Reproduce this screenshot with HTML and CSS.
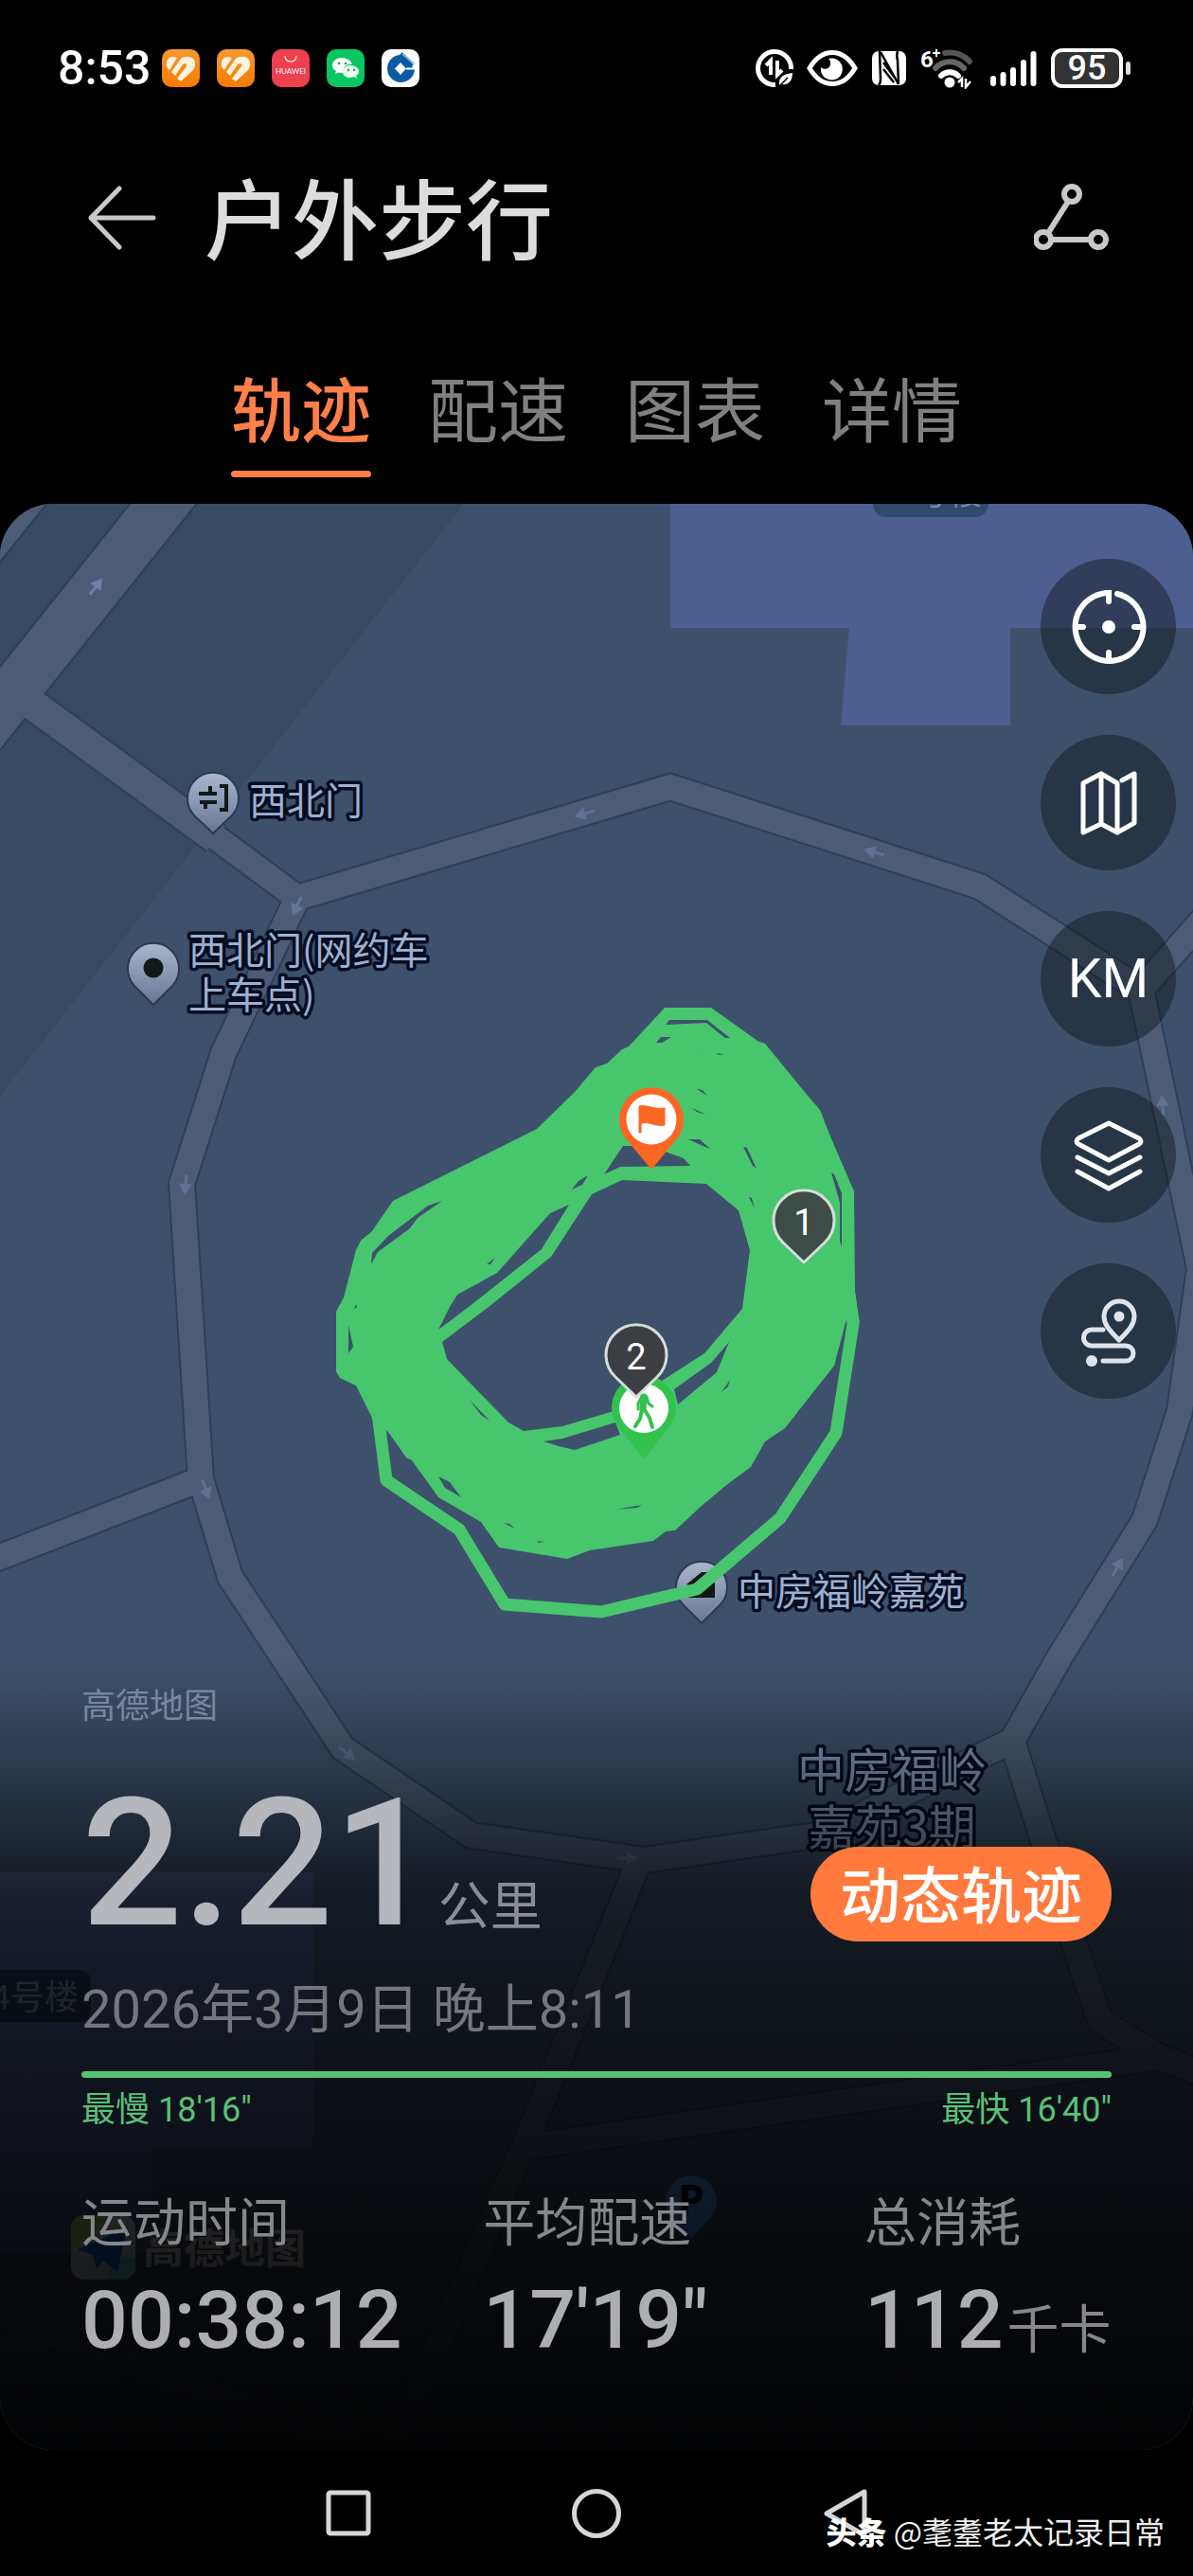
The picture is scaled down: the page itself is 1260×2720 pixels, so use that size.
FILE: index.html
```html
<!DOCTYPE html>
<html lang="zh-CN">
<head>
    <meta charset="UTF-8">
    <meta name="viewport" content="width=device-width, initial-scale=1.0">
    <title>户外步行</title>
    <link rel="stylesheet" href="styles.css">
</head>
<body>
    <!-- shared shapes -->
    <svg class="defs" width="0" height="0" aria-hidden="true">
        <defs>
            <linearGradient id="pinGrey" x1="0" y1="0" x2="0" y2="1">
                <stop offset="0" stop-color="#a9b7cd"/>
                <stop offset="1" stop-color="#667795"/>
            </linearGradient>
            <linearGradient id="orange" x1="0" y1="0" x2="0" y2="1">
                <stop offset="0" stop-color="#f79a2e"/>
                <stop offset="1" stop-color="#f77a05"/>
            </linearGradient>
            <symbol id="health" viewBox="0 0 40 40">
                <rect width="40" height="40" rx="10" fill="url(#orange)"/>
                <path d="M5 17C4 12 7 8 12 8L16 9L8 22C6 20 5 19 5 17ZM10 24L20 10C24 7 31 7 34 11C36 15 35 19 33 22L20 34L16 31L26 18C27 15 24 14 22 16L14 28Z" fill="#fff3df"/>
            </symbol>
            <symbol id="arrow" viewBox="-12 -12 24 24">
                <path d="M-10 0H4" stroke="#6b7fa8" stroke-width="3"/>
                <path d="M0 -7L12 0L0 7Z" fill="#6b7fa8"/>
            </symbol>
        </defs>
    </svg>

    <div class="status-bar">
        <span class="clock">8:53</span>
        <div class="apps">
            <svg width="40" height="40"><use href="#health"/></svg>
            <svg width="40" height="40"><use href="#health"/></svg>
            <svg width="40" height="40" viewBox="0 0 40 40">
                <rect width="40" height="40" rx="10" fill="#ef4050"/>
                <path d="M14 7C14 15 26 15 26 7" fill="none" stroke="#fff" stroke-width="1.2"/>
                <text x="20" y="26" class="huawei">HUAWEI</text>
            </svg>
            <svg width="40" height="40" viewBox="0 0 40 40">
                <rect width="40" height="40" rx="10" fill="#08c762"/>
                <path d="M16 9C10 9 6 13 6 17C6 20 8 22 10 23L9 26L13 24.500C14 25 17 25 18 25C16 19 21 15 27 16C26 12 21 9 16 9Z" fill="#fff"/>
                <path d="M25 17C20 17 17 20 17 24C17 28 21 30 25 30L29 29L32 31L31 28C33 27 34 25 34 23C34 20 30 17 25 17Z" fill="#e9fff2"/>
                <g fill="#08a050"><circle cx="13" cy="15" r="1.300"/><circle cx="20" cy="15" r="1.300"/><circle cx="23" cy="22" r="1.200"/><circle cx="29" cy="22" r="1.200"/></g>
            </svg>
            <svg width="40" height="40" viewBox="0 0 40 40">
                <rect width="40" height="40" rx="10" fill="#fff"/>
                <path d="M19 6L34 20L35 21A14.500 14.500 0 1 1 19 6Z" fill="#0a5aa6"/>
                <path d="M20 5L33 17" stroke="#0a5aa6" stroke-width="5"/>
                <path d="M22 5L34 16" stroke="#fff" stroke-width="1"/>
                <path d="M20 14L26 20.500L20 27L14 20.500Z" fill="#fff"/>
                <path d="M26 20.500H36" stroke="#fff" stroke-width="2"/>
            </svg>
        </div>
        <div class="signals">
            <svg width="40" height="40" viewBox="0 0 40 40" fill="none" stroke="#fff">
                <path d="M21 37.500A17.500 17.500 0 1 1 37.500 21" stroke-width="5"/>
                <path d="M11 17L16 12V27M23 12V27L28 22" stroke-width="4"/>
                <path d="M25 38C24 29 30 26 39 25C39 34 34 38 28 37Z" fill="#fff" stroke="none"/>
                <path d="M24 40L34 30" stroke="#000" stroke-width="1.500"/>
            </svg>
            <svg width="54" height="40" viewBox="0 0 54 40">
                <path d="M3 20C16 -2 38 -2 51 20C38 42 16 42 3 20Z" fill="none" stroke="#fff" stroke-width="5"/>
                <path d="M23 10A11.500 11.500 0 1 1 15 19C19 23 26 20 25 14C25 12 24 11 23 10Z" fill="#fff"/>
            </svg>
            <svg width="38" height="40" viewBox="0 0 38 40">
                <rect x="1" y="2" width="36" height="36" rx="7" fill="#fff"/>
                <path d="M9 2L10 32C10 35 9 37 8 38M28 2C27 5 27 8 28 12L29 37" fill="none" stroke="#000" stroke-width="2.500"/>
                <path d="M10 3L29 37M13 14L25 30M13 21L24 35" fill="none" stroke="#000" stroke-width="2.500"/>
            </svg>
            <svg width="58" height="44" viewBox="0 0 58 44">
                <text x="0" y="21" class="wifi-gen">6</text>
                <path d="M13 6H21M17 2V10" stroke="#fff" stroke-width="2"/>
                <g fill="none" stroke-width="6" stroke-linecap="round">
                    <path d="M26 6C36 4 46 8 52 15" stroke="#555"/>
                    <path d="M16 22C24 13 38 13 46 22" stroke="#666"/>
                    <path d="M22 30C27 25 35 25 40 30" stroke="#fff"/>
                </g>
                <circle cx="31" cy="37" r="5.500" fill="#fff"/>
                <path d="M40 37L44 33V42M48 33V42L53 36" fill="none" stroke="#fff" stroke-width="2.500"/>
            </svg>
            <svg width="52" height="40" viewBox="0 0 52 40" stroke="#fff" stroke-width="6" stroke-linecap="round">
                <path d="M5 31V36M15.500 27V36M26 22V36M37 14V36M47.500 5V36"/>
            </svg>
            <div class="battery">95</div>
        </div>
    </div>

    <header class="title-bar">
        <button class="icon-button" aria-label="返回">
            <svg width="74" height="72" viewBox="0 0 74 72" fill="none" stroke="#c9c9c9" stroke-width="5" stroke-linecap="round" stroke-linejoin="round">
                <path d="M70 36H4M34 5L4 36L34 67"/>
            </svg>
        </button>
        <h1>户外步行</h1>
        <button class="icon-button" aria-label="分享">
            <svg width="80" height="72" viewBox="0 0 80 72" fill="none" stroke="#c9c9c9" stroke-width="6">
                <circle cx="40" cy="11" r="8"/>
                <circle cx="10" cy="59" r="8"/>
                <circle cx="68" cy="59" r="8"/>
                <path d="M36 19L15 52M19 59H59"/>
            </svg>
        </button>
    </header>

    <nav class="tabs">
        <a href="#track" class="active">轨迹</a>
        <a href="#pace">配速</a>
        <a href="#chart">图表</a>
        <a href="#detail">详情</a>
    </nav>

    <main class="map" id="track">
        <svg class="map-canvas" viewBox="0 532 1260 2055" preserveAspectRatio="xMidYMin slice">
            <rect y="532" width="1260" height="2055" fill="#3d516d"/>
            <path d="M0 532H490L0 1157Z" fill="#374a64"/>
            <!-- buildings -->
            <path d="M708 532H1260V663H1067V766H888L897 663H708Z" fill="#4d5f90"/>
            <path d="M0 1977H331V2266H162V2378H0Z" fill="#4d5f90"/>

            <!-- roads: dark casing first, then the surface -->
            <g class="casing">
                <path d="M0 532H48L0 592Z"/>
                <path class="wide" d="M198 500L-40 798"/>
                <path class="mid" d="M14 729L228 885"/>
                <path d="M225 882L314 948L708 831L1035 936L1205 1045L1267 1339L1246 1490L1209 1605L1119 1750L1069 1838L868 1937L680 1964L498 1938L362 1846L299 1750L243 1665L212 1562L192 1250L236 1112L314 948"/>
                <path d="M1205 1045L1290 949M212 1562L-10 1648M1069 1838L1104 1950L1134 2050L1162 2134L1225 2172L1280 2194M1225 2172L555 2267M675 1965L560 2250L405 2610M-10 2480L58 2467L400 2590"/>
            </g>
            <g class="surface">
                <path d="M0 532H48L0 592Z"/>
                <path class="wide" d="M198 500L-40 798"/>
                <path class="mid" d="M14 729L228 885"/>
                <path d="M225 882L314 948L708 831L1035 936L1205 1045L1267 1339L1246 1490L1209 1605L1119 1750L1069 1838L868 1937L680 1964L498 1938L362 1846L299 1750L243 1665L212 1562L192 1250L236 1112L314 948"/>
                <path d="M1205 1045L1290 949M212 1562L-10 1648M1069 1838L1104 1950L1134 2050L1162 2134L1225 2172L1280 2194M1225 2172L555 2267M675 1965L560 2250L405 2610M-10 2480L58 2467L400 2590"/>
            </g>
            <g>
                <use href="#arrow" x="-12" y="-12" width="24" height="24" transform="translate(101 620) rotate(-52)"/>
                <use href="#arrow" x="-12" y="-12" width="24" height="24" transform="translate(618 859) rotate(163)" opacity=".6"/>
                <use href="#arrow" x="-12" y="-12" width="24" height="24" transform="translate(924 900) rotate(197)" opacity=".6"/>
                <use href="#arrow" x="-12" y="-12" width="24" height="24" transform="translate(314 956) rotate(115)" opacity=".7"/>
                <use href="#arrow" x="-12" y="-12" width="24" height="24" transform="translate(196 1250) rotate(95)" opacity=".6"/>
                <use href="#arrow" x="-12" y="-12" width="24" height="24" transform="translate(217 1572) rotate(70)" opacity=".6"/>
                <use href="#arrow" x="-12" y="-12" width="24" height="24" transform="translate(366 1851) rotate(40)" opacity=".6"/>
                <use href="#arrow" x="-12" y="-12" width="24" height="24" transform="translate(662 1962)" opacity=".6"/>
                <use href="#arrow" x="-12" y="-12" width="24" height="24" transform="translate(1180 1655) rotate(-60)" opacity=".6"/>
                <use href="#arrow" x="-12" y="-12" width="24" height="24" transform="translate(1228 1168) rotate(-95)" opacity=".6"/>
            </g>

            <!-- building numbers -->
            <rect x="922" y="500" width="122" height="46" rx="14" fill="#2f4a6a"/>
            <text x="966" y="533" class="building">号楼</text>
            <rect x="-30" y="2080" width="126" height="55" rx="12" fill="#1f3650"/>
            <text x="-9" y="2122" class="building">4号楼</text>

            <!-- places -->
            <g fill="url(#pinGrey)" stroke="#2a3a52" stroke-width="2">
                <path d="M225 880L205 861A27 27 0 1 1 245 861Z"/>
                <path d="M162 1061L142 1041A27 27 0 1 1 182 1041Z"/>
                <path d="M741 1714L721 1694A27 27 0 1 1 761 1694Z"/>
            </g>
            <path d="M232 830H239V855H232M210 838H229M222 830V838M229 847H211M217 848V854" fill="none" stroke="#10181a" stroke-width="4"/>
            <circle cx="162" cy="1022" r="10.500" fill="#10181a"/>
            <path d="M725 1673L741 1660H748L755 1672V1687H727V1682H734V1676Z" fill="#10181a"/>
            <g class="place">
                <text x="263" y="860">西北门</text>
                <text x="199" y="1018">西北门(网约车</text>
                <text x="199" y="1065">上车点)</text>
                <text x="779" y="1695">中房福岭嘉苑</text>
            </g>
            <g class="place area">
                <text x="942" y="1888">中房福岭</text>
                <text x="942" y="1948">嘉苑3期</text>
            </g>

            <!-- parking -->
            <path d="M730 2364L708 2340A27 27 0 1 1 752 2340Z" fill="#5f9cff"/>
            <text x="730" y="2337" class="parking">P</text>

            <!-- map provider -->
            <g>
                <rect x="75" y="2339" width="68" height="68" rx="14" fill="#e4ecf2"/>
                <path d="M75 2375V2353A14 14 0 0 1 89 2339H115L98 2360Z" fill="#b4f070"/>
                <path d="M110 2407L125 2385H143V2393A14 14 0 0 1 129 2407Z" fill="#80e8ff"/>
                <path d="M82 2375L134 2352L124 2399L109 2387L102 2396L98 2381Z" fill="#0a7cff"/>
                <text x="151" y="2390" class="provider">高德地图</text>
            </g>

            <!-- recorded track -->
            <path class="track" fill-rule="evenodd" d="M702 1064H751L800 1099L808 1102L849 1152L866 1172L877 1200L902 1258L903 1365L908 1397L894 1393L881 1442L829 1508L808 1522L793 1549L766 1569L741 1590L713 1616L703 1617L690 1627L623 1637L599 1646L575 1642L527 1634L508 1607L463 1581L435 1542L429 1539L410 1512L393 1497L376 1463L359 1455L355 1448V1385L363 1370L376 1320L381 1310L393 1300L415 1268L567 1192L607 1153L629 1127L641 1123L657 1108L664 1105Z
                M657 1246L746 1250L780 1278L792 1320L784 1382L744 1429L699 1458L648 1490L594 1506L553 1511L537 1502L472 1435L467 1417L516 1380L582 1327L625 1261Z
                M601 1272L581 1281L525 1344L483 1367L475 1380L463 1404L495 1380L572 1319Z
                M658 1210H685L722 1223L729 1231L655 1232L638 1240Z
                M621 1241L611 1247L604 1256L615 1251Z
                M467 1268L452 1273L410 1305L393 1323L392 1335L399 1322L433 1297L441 1286Z
                M703 1082L707 1077H747L771 1096H766L746 1080Z
                M693 1101L698 1095H709L699 1101Z
                M736 1150L742 1151L747 1157ZM731 1170L746 1177L736 1174ZM741 1110L745 1109ZM756 1112L765 1113L760 1114Z
                M727 1203H739L750 1213L738 1208Z
                M785 1211L789 1212L799 1234L795 1231Z
                M791 1264L794 1265L797 1276Z
                M878 1238L881 1240L889 1260V1317L887 1310V1270Z
                M514 1335L523 1328L518 1335Z
                M495 1477L517 1500L508 1494Z
                M463 1559L475 1565L487 1581L470 1571Z
                M650 1594L678 1589L673 1592Z
                M532 1608L538 1609L544 1614ZM567 1627L575 1628L569 1629Z
                M770 1417L751 1439L712 1467L716 1483L757 1449Z
                M574 1522L594 1519L650 1502L655 1515L607 1531L590 1527Z
                M771 1457L762 1470L769 1464Z
                M368 1399L373 1422L368 1429ZM376 1377L377 1380L374 1383ZM427 1384L429 1390Z"/>
            <path class="lap" d="M896 1360L901 1398L883 1513L824 1603L736 1678L635 1702L533 1694L485 1615L408 1563L400 1500L396 1480"/>

            <!-- start, kilometre marks and finish -->
            <path d="M680 1541L651 1504A34 34 0 1 1 709 1504Z" fill="#33c24e"/>
            <circle cx="680" cy="1487" r="26" fill="#fff"/>
            <g fill="none" stroke="#33c24e" stroke-linecap="round" stroke-linejoin="round">
                <path d="M680 1475L679 1488" stroke-width="7"/>
                <path d="M678 1474L674 1482V1488M683 1475L685 1482L689 1485" stroke-width="3"/>
                <path d="M678 1489L676 1498L671 1506M681 1489L686 1497L689 1507" stroke-width="4"/>
            </g>
            <g class="km">
                <path d="M849 1333L827 1312A32 32 0 1 1 871 1312Z" fill="#3d4c46"/>
                <path d="M672 1475L650 1454A32 32 0 1 1 694 1454Z" fill="#3d3e43"/>
                <text x="849" y="1304">1</text>
                <text x="672" y="1446">2</text>
            </g>
            <path d="M688 1235L659 1200A34 34 0 1 1 717 1200Z" fill="#fb6622"/>
            <circle cx="688" cy="1182" r="26.500" fill="#fff"/>
            <path d="M675 1196V1168C684 1166 691 1172 702 1170V1188C692 1190 687 1184 677 1186V1196Z" fill="#fb6622" stroke="#fb6622"/>
        </svg>

        <div class="tools">
            <button aria-label="定位">
                <svg width="80" height="80" viewBox="0 0 80 80" fill="none" stroke="#fff" stroke-width="6" stroke-linecap="round">
                    <path d="M49 5A36 36 0 1 1 40 4V13"/>
                    <path d="M40 75V67M5 40H13M75 40H67"/>
                    <circle cx="40" cy="40" r="7" fill="#fff" stroke="none"/>
                </svg>
            </button>
            <button aria-label="地图类型">
                <svg width="80" height="80" viewBox="0 0 80 80" fill="none" stroke="#fff" stroke-width="5" stroke-linecap="round" stroke-linejoin="round">
                    <path d="M54 16L67 9V61L49 71L32 62L13 71V19L32 9L49 19V71M32 9V62"/>
                </svg>
            </button>
            <button class="km-toggle">KM</button>
            <button aria-label="图层">
                <svg width="80" height="80" viewBox="0 0 80 80" fill="none" stroke="#fff" stroke-width="5" stroke-linecap="round" stroke-linejoin="round">
                    <path d="M40 6L72 22Q76 25 72 28L40 45L8 28Q4 25 8 22Z"/>
                    <path d="M7 42L40 59L73 42M7 57L40 75L73 57"/>
                </svg>
            </button>
            <button aria-label="路线">
                <svg width="80" height="80" viewBox="0 0 80 80" fill="none" stroke="#e0e4ec" stroke-width="5" stroke-linecap="round">
                    <path d="M51 49C40 38 35 32 35 24A16 16 0 0 1 67 24C67 32 62 38 51 49Z" stroke-linejoin="round"/>
                    <circle cx="51" cy="24" r="5.500" fill="#e0e4ec" stroke="none"/>
                    <path d="M34 38H22A8 8 0 0 0 22 55H58A8 8 0 0 1 58 71H34"/>
                    <circle cx="22" cy="71" r="6" fill="#e0e4ec" stroke="none"/>
                </svg>
            </button>
        </div>

        <section class="summary">
            <p class="source">高德地图</p>
            <div class="distance">
                <p><span class="number">2.21</span> <span class="unit">公里</span></p>
                <button class="replay">动态轨迹</button>
            </div>
            <p class="date">2026年3月9日 晚上8:11</p>
            <div class="pace-line"></div>
            <div class="pace-range">
                <span>最慢 18'16"</span>
                <span>最快 16'40"</span>
            </div>
            <dl class="stats">
                <div>
                    <dt>运动时间</dt>
                    <dd>00:38:12</dd>
                </div>
                <div>
                    <dt>平均配速</dt>
                    <dd>17'19"</dd>
                </div>
                <div>
                    <dt>总消耗</dt>
                    <dd>112<small>千卡</small></dd>
                </div>
            </dl>
        </section>
    </main>

    <footer class="nav-bar">
        <button aria-label="最近任务">
            <svg width="52" height="54" viewBox="0 0 52 54" fill="none" stroke="#d6d6d6" stroke-width="5">
                <rect x="5" y="5" width="42" height="43" rx="2"/>
            </svg>
        </button>
        <button aria-label="主屏幕">
            <svg width="52" height="54" viewBox="0 0 52 54" fill="none" stroke="#d6d6d6" stroke-width="5">
                <circle cx="26" cy="27" r="23.500"/>
            </svg>
        </button>
        <button aria-label="返回上一级">
            <svg width="52" height="54" viewBox="0 0 52 54" fill="none" stroke="#d6d6d6" stroke-width="5" stroke-linejoin="round">
                <path d="M47 4V50L7 27Z"/>
            </svg>
        </button>
        <p class="author"><b>头条</b> @耄耋老太记录日常</p>
    </footer>
</body>
</html>
```
FILE: styles.css
```css
* {
    box-sizing: border-box;
}

body {
    margin: 0;
    min-height: 100vh;
    display: flex;
    flex-direction: column;
    background-color: #000;
    color: #fff;
    font-family: "Noto Sans CJK SC", "Noto Sans", sans-serif;
}

h1,
p,
dl,
dd {
    margin: 0;
}

button {
    border: none;
    padding: 0;
    background: none;
    color: inherit;
    font-family: inherit;
    cursor: pointer;
}

svg {
    display: block;
}

.defs {
    position: absolute;
}

/* numbers are set in Roboto */
.clock,
.battery,
.wifi-gen,
.km-toggle,
.km text,
.number,
.date,
.pace-range,
.stats dd {
    font-family: Roboto, "Noto Sans CJK SC", sans-serif;
}

/* status bar */
.status-bar {
    height: 144px;
    padding: 0 74px 0 61px;
    display: flex;
    align-items: center;
}

.clock {
    font-size: 50px;
    font-weight: 500;
    margin-right: 12px;
}

.apps {
    display: flex;
    gap: 18px;
}

.huawei {
    font-family: Lato, sans-serif;
    font-size: 8px;
    fill: #fff;
    text-anchor: middle;
}

.signals {
    margin-left: auto;
    display: flex;
    align-items: center;
    gap: 14px;
}

.wifi-gen {
    font-size: 24px;
    font-weight: 700;
    fill: #fff;
}

.battery {
    position: relative;
    width: 76px;
    height: 42px;
    border: 4px solid #fff;
    border-radius: 12px;
    background-color: #333;
    font-size: 36px;
    font-weight: 500;
    line-height: 35px;
    text-align: center;
}

.battery::after {
    content: "";
    position: absolute;
    right: -12px;
    top: 10px;
    width: 5px;
    height: 14px;
    border-radius: 3px;
    background-color: #ddd;
}

/* title */
.title-bar {
    height: 172px;
    padding: 0 88px 0 92px;
    display: flex;
    align-items: center;
}

.title-bar h1 {
    flex: 1;
    margin-left: 50px;
    padding-bottom: 6px;
    font-size: 92px;
    font-weight: 500;
    line-height: 120px;
    color: #dcdcdc;
}

/* tabs */
.tabs {
    display: flex;
    justify-content: center;
    gap: 60px;
    padding: 59px 0 28px;
}

.tabs a {
    position: relative;
    padding-bottom: 21px;
    font-size: 74px;
    line-height: 108px;
    color: #808080;
    text-decoration: none;
}

.tabs .active {
    color: #ff7f49;
    font-weight: 500;
}

.tabs .active::after {
    content: "";
    position: absolute;
    left: 0;
    right: 0;
    bottom: 0;
    height: 7px;
    border-radius: 4px;
    background-color: #ff7f49;
}

/* map */
.map {
    position: relative;
    flex: 1;
    display: flex;
    flex-direction: column;
    justify-content: space-between;
    border-radius: 56px;
    overflow: hidden;
}

.map-canvas {
    position: absolute;
    left: 0;
    top: 0;
    width: 100%;
    height: 100%;
}

.casing path,
.surface path {
    fill: none;
    stroke-linejoin: miter;
}

.casing path {
    stroke: #2c3f5c;
    stroke-width: 30px;
}

.casing .mid {
    stroke-width: 36px;
}

.casing .wide {
    stroke-width: 57px;
}

.surface path {
    stroke: #4c5c76;
    stroke-width: 26px;
}

.surface .mid {
    stroke-width: 32px;
}

.surface .wide {
    stroke-width: 53px;
}

.casing path:first-child {
    stroke-width: 4px;
}

.surface path:first-child {
    fill: #4c5c76;
    stroke-width: 0;
}

.building {
    font-size: 36px;
    fill: #7486a6;
}

.place {
    font-size: 40px;
    fill: #9db0cf;
    stroke: #050d22;
    stroke-width: 7px;
    stroke-linejoin: round;
    paint-order: stroke;
}

.area {
    font-size: 50px;
    text-anchor: middle;
    fill: #8297bd;
}

.parking {
    font-size: 40px;
    font-weight: 900;
    text-anchor: middle;
    fill: #0b1020;
}

.provider {
    font-size: 43px;
    font-weight: 700;
    fill: #e4e4e4;
}

.track {
    fill: #48c66e;
}

.lap {
    fill: none;
    stroke: #48c66e;
    stroke-width: 13px;
    stroke-linejoin: round;
}

.km path {
    stroke: #d5ded8;
    stroke-width: 3px;
    stroke-linejoin: round;
}

.km text {
    font-size: 38px;
    text-anchor: middle;
    fill: #fff;
}

/* buttons on the map */
.tools {
    position: relative;
    align-self: flex-end;
    display: flex;
    flex-direction: column;
    gap: 43px;
    margin: 58px 18px 0 0;
}

.tools button {
    width: 143px;
    height: 143px;
    border-radius: 50%;
    background-color: rgba(10, 16, 20, 0.42);
    display: flex;
    align-items: center;
    justify-content: center;
}

.tools .km-toggle {
    font-size: 57px;
    line-height: 64px;
    color: #fff;
}

/* summary over the map */
.summary {
    position: relative;
    padding: 24px 86px 77px;
    background: linear-gradient(rgba(0, 0, 0, 0), rgba(0, 0, 0, 0.25) 12%, rgba(0, 0, 0, 0.4) 18%, rgba(0, 0, 0, 0.56) 24%, rgba(0, 0, 0, 0.67) 30%, rgba(0, 0, 0, 0.74) 42%, rgba(0, 0, 0, 0.82) 60%, rgba(0, 0, 0, 0.88) 76%, rgba(0, 0, 0, 0.97));
}

.source {
    font-size: 36px;
    line-height: 48px;
    color: #76869f;
}

.distance {
    display: flex;
    justify-content: space-between;
    align-items: flex-end;
    margin-top: 64px;
}

.distance p {
    display: flex;
    align-items: baseline;
    gap: 4px;
}

.number {
    font-size: 188px;
    font-weight: 500;
    line-height: 164px;
    color: #b5b7bd;
}

.unit {
    font-size: 55px;
    line-height: 72px;
    color: #8a8d95;
}

.replay {
    width: 318px;
    height: 100px;
    padding-bottom: 6px;
    border-radius: 50px;
    background-color: #ff7a3c;
    font-size: 64px;
    font-weight: 500;
    line-height: 88px;
    color: #fff;
}

.date {
    margin-top: 32px;
    font-size: 56px;
    line-height: 80px;
    color: #74767c;
}

.pace-line {
    height: 7px;
    margin-top: 25px;
    border-radius: 4px;
    background-color: #55c373;
}

.pace-range {
    display: flex;
    justify-content: space-between;
    margin-top: 6px;
    font-size: 36px;
    line-height: 56px;
    color: #5bc078;
}

.stats {
    display: grid;
    grid-template-columns: 39fr 37fr 24fr;
    margin-top: 50px;
}

.stats dt {
    font-size: 55px;
    line-height: 72px;
    color: #85878a;
}

.stats dd {
    margin-top: 12px;
    font-size: 86px;
    font-weight: 500;
    line-height: 120px;
    color: #adaeb0;
    white-space: nowrap;
}

.stats small {
    margin-left: 4px;
    font-size: 55px;
    font-weight: 400;
    line-height: 72px;
    color: #85878a;
}

/* system navigation */
.nav-bar {
    position: relative;
    height: 133px;
    display: flex;
    justify-content: center;
    align-items: center;
    gap: 210px;
}

.author {
    position: absolute;
    right: 30px;
    bottom: 24px;
    font-size: 32px;
    line-height: 48px;
    color: #eee;
}

.author b {
    font-weight: 900;
    color: #fff;
}
```
